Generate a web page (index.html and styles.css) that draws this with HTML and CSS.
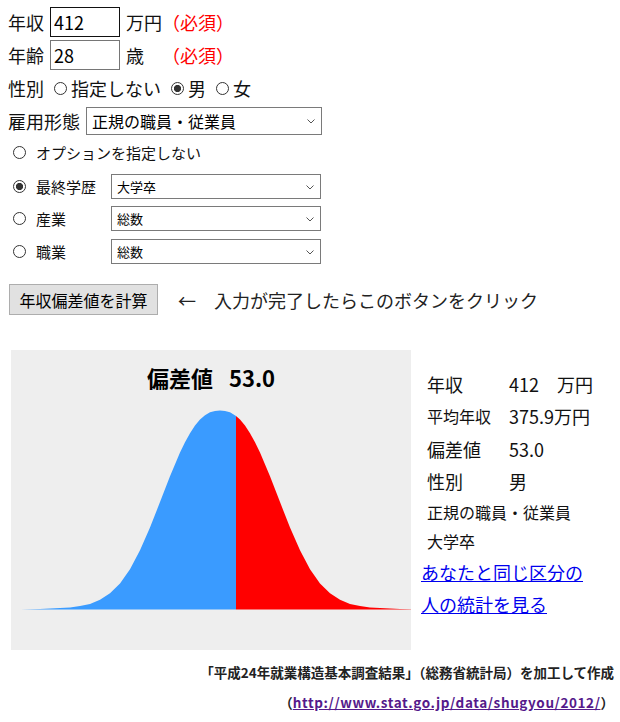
FILE: index.html
```html
<!DOCTYPE html>
<html lang="ja">
<head>
<meta charset="utf-8">
<title>年収偏差値</title>
<link rel="stylesheet" href="styles.css">
</head>
<body>
<div class="page">
  <div class="row r1">
    <span class="lbl">年収</span>
    <input class="txt focus" type="text" value="412">
    <span class="unit">万円</span>
    <span class="req">（必須）</span>
  </div>
  <div class="row r2">
    <span class="lbl">年齢</span>
    <input class="txt" type="text" value="28">
    <span class="unit">歳</span>
    <span class="req">（必須）</span>
  </div>
  <div class="row r3">
    <span class="lbl">性別</span>
    <label class="sx"><input class="rd" type="radio" name="sex">指定しない</label>
    <label class="sx"><input class="rd" type="radio" name="sex" checked>男</label>
    <label class="sx"><input class="rd" type="radio" name="sex">女</label>
  </div>
  <div class="row r4">
    <span class="lbl">雇用形態</span>
    <span class="selwrap">
      <select class="sel sel-lg"><option>正規の職員・従業員</option></select>
      <svg class="chev" width="8" height="5" viewBox="0 0 8 5"><path d="M0.5 0.5 L4 4 L7.5 0.5" fill="none" stroke="#555" stroke-width="1"/></svg>
    </span>
  </div>
  <div class="opt o1">
    <input class="rd" type="radio" name="opt">
    <span class="olbl">オプションを指定しない</span>
  </div>
  <div class="opt o2">
    <input class="rd" type="radio" name="opt" checked>
    <span class="olbl ow">最終学歴</span>
    <span class="selwrap">
      <select class="sel sel-sm"><option>大学卒</option></select>
      <svg class="chev" width="8" height="5" viewBox="0 0 8 5"><path d="M0.5 0.5 L4 4 L7.5 0.5" fill="none" stroke="#555" stroke-width="1"/></svg>
    </span>
  </div>
  <div class="opt o3">
    <input class="rd" type="radio" name="opt">
    <span class="olbl ow">産業</span>
    <span class="selwrap">
      <select class="sel sel-sm"><option>総数</option></select>
      <svg class="chev" width="8" height="5" viewBox="0 0 8 5"><path d="M0.5 0.5 L4 4 L7.5 0.5" fill="none" stroke="#555" stroke-width="1"/></svg>
    </span>
  </div>
  <div class="opt o4">
    <input class="rd" type="radio" name="opt">
    <span class="olbl ow">職業</span>
    <span class="selwrap">
      <select class="sel sel-sm"><option>総数</option></select>
      <svg class="chev" width="8" height="5" viewBox="0 0 8 5"><path d="M0.5 0.5 L4 4 L7.5 0.5" fill="none" stroke="#555" stroke-width="1"/></svg>
    </span>
  </div>
  <div class="btnrow">
    <button class="btn" type="button">年収偏差値を計算</button>
    <span class="hint">←　入力が完了したらこのボタンをクリック</span>
  </div>

  <div class="result">
    <div class="chart">
      <div class="ctitle">偏差値<span class="cval">53.0</span></div>
      <svg class="curve" width="400" height="258" viewBox="0 42 400 258">
        <path fill="#3a9bff" d="M10,259.5 L19,259.2 L29,258.9 L39,258.6 L49,258.1 L59,257.4 L69,256.0 L79,254.0 L89,249.8 L99,243.2 L109,233.4 L119,219.3 L129,200.3 L139,177.5 L149,152.1 L159,126.2 L169,102.6 L174,92.3 L179,83.2 L184,75.6 L189,69.6 L194,65.2 L199,62.3 L204,60.9 L209,60.5 L214,60.9 L219,62.3 L225,65.9 L225,259.5 Z"/>
        <path fill="#ff0000" d="M225,259.5 L225,65.9 L229,69.6 L234,75.6 L239,83.2 L244,92.3 L249,102.6 L259,126.2 L269,152.1 L279,177.5 L289,200.3 L299,219.3 L309,233.4 L319,243.2 L329,249.8 L339,254.0 L349,256.0 L359,257.4 L369,258.1 L379,258.6 L389,258.9 L400,259.3 L400,259.5 Z"/>
      </svg>
    </div>
    <div class="info">
      <div class="irow"><span class="ilab">年収</span><span class="ival">412　万円</span></div>
      <div class="irow"><span class="ilab small">平均年収</span><span class="ival">375.9万円</span></div>
      <div class="irow tall"><span class="ilab">偏差値</span><span class="ival">53.0</span></div>
      <div class="irow"><span class="ilab">性別</span><span class="ival">男</span></div>
      <div class="irow sm"><span class="ifull">正規の職員・従業員</span></div>
      <div class="irow sm"><span class="ifull">大学卒</span></div>
      <a class="ilink" href="#">あなたと同じ区分の<br>人の統計を見る</a>
    </div>
  </div>

  <div class="foot">
    <div>「平成24年就業構造基本調査結果」（総務省統計局）を加工して作成</div>
    <div>（<a class="flink" href="#">http://www.stat.go.jp/data/shugyou/2012/</a>）</div>
  </div>
</div>
</body>
</html>
```

FILE: styles.css
```css
html, body {
  margin: 0;
  padding: 0;
  background: #fff;
}
body {
  font-family: "Noto Sans CJK JP", "Noto Sans", sans-serif;
  font-size: 18px;
  color: #111;
}
.page {
  padding: 7px 6px 0 8px;
}
.row {
  display: flex;
  align-items: center;
  height: 30px;
}
.r2, .r3 { margin-top: 3px; }
.r4 { margin-top: 4px; height: 28px; }
.lbl { white-space: nowrap; }
.txt {
  box-sizing: border-box;
  width: 70px;
  height: 30px;
  margin: 0 6px;
  padding: 0 3px;
  border: 1px solid #767676;
  border-radius: 0;
  font-family: inherit;
  font-size: 18px;
  color: #000;
  background: #fff;
  outline: none;
}
.txt.focus { border-color: #111; }
.unit { width: 36px; }
.req { color: #ff0000; }

.rd {
  appearance: none;
  -webkit-appearance: none;
  box-sizing: border-box;
  width: 13px;
  height: 13px;
  margin: 0;
  border: 1px solid #333;
  border-radius: 50%;
  background: #fff;
  flex: none;
}
.rd:checked {
  background: radial-gradient(circle, #333 0 3.3px, #fff 3.9px);
}
.sx {
  display: flex;
  align-items: center;
  gap: 4px;
  margin-left: 10px;
}
.selwrap {
  position: relative;
  display: inline-block;
}
.sel {
  appearance: none;
  -webkit-appearance: none;
  box-sizing: border-box;
  display: block;
  border: 1px solid #7a7a7a;
  border-radius: 0;
  background: #fff;
  color: #000;
  font-family: inherit;
  padding: 0 0 0 5px;
  outline: none;
}
.sel-lg {
  width: 236px;
  height: 28px;
  margin-left: 6px;
  font-size: 16px;
}
.sel-sm {
  width: 210px;
  height: 25px;
  font-size: 13px;
}
.chev {
  position: absolute;
  right: 7px;
  top: 50%;
  margin-top: -2px;
}
.opt {
  display: flex;
  align-items: center;
  height: 25px;
  font-size: 15px;
}
.opt .rd { margin-left: 5px; margin-right: 10px; }
.o1 { margin-top: 5px; height: 24px; }
.o2 { margin-top: 10px; }
.o3 { margin-top: 7px; }
.o4 { margin-top: 8px; }
.ow { width: 75px; }

.btnrow {
  display: flex;
  align-items: center;
  margin-top: 20px;
  height: 31px;
}
.btn {
  box-sizing: border-box;
  margin-left: 1px;
  width: 149px;
  height: 31px;
  padding: 0;
  border: 1px solid #adadad;
  border-radius: 0;
  background: #e1e1e1;
  color: #000;
  font-family: inherit;
  font-size: 16px;
}
.hint {
  margin-left: 20px;
  color: #222;
}

.result {
  display: flex;
  align-items: flex-start;
  margin-top: 35px;
}
.chart {
  margin-left: 3px;
  width: 400px;
  height: 300px;
  background: #eeeeee;
}
.ctitle {
  padding-top: 12px;
  height: 30px;
  line-height: 30px;
  text-align: center;
  font-weight: bold;
  font-size: 22px;
  color: #000;
}
.cval { margin-left: 16px; }
.curve { display: block; }

.info {
  margin-left: 10px;
  margin-top: 18px;
}
.irow {
  display: flex;
  align-items: center;
  height: 32px;
  white-space: nowrap;
}
.irow.tall { height: 33px; }
.irow.sm { height: 29px; font-size: 16px; }
.ilab {
  width: 82px;
  padding-left: 6px;
}
.ilab.small { font-size: 16px; }
.ifull { padding-left: 6px; }
.ilink {
  display: block;
  margin-top: 1px;
  line-height: 32px;
  color: #0000ee;
  text-decoration: underline;
}

.foot {
  margin-top: 7px;
  text-align: right;
  font-size: 13.5px;
  font-weight: bold;
  line-height: 30px;
  color: #222;
}
.flink {
  color: #551a8b;
  letter-spacing: 0.6px;
}
```
